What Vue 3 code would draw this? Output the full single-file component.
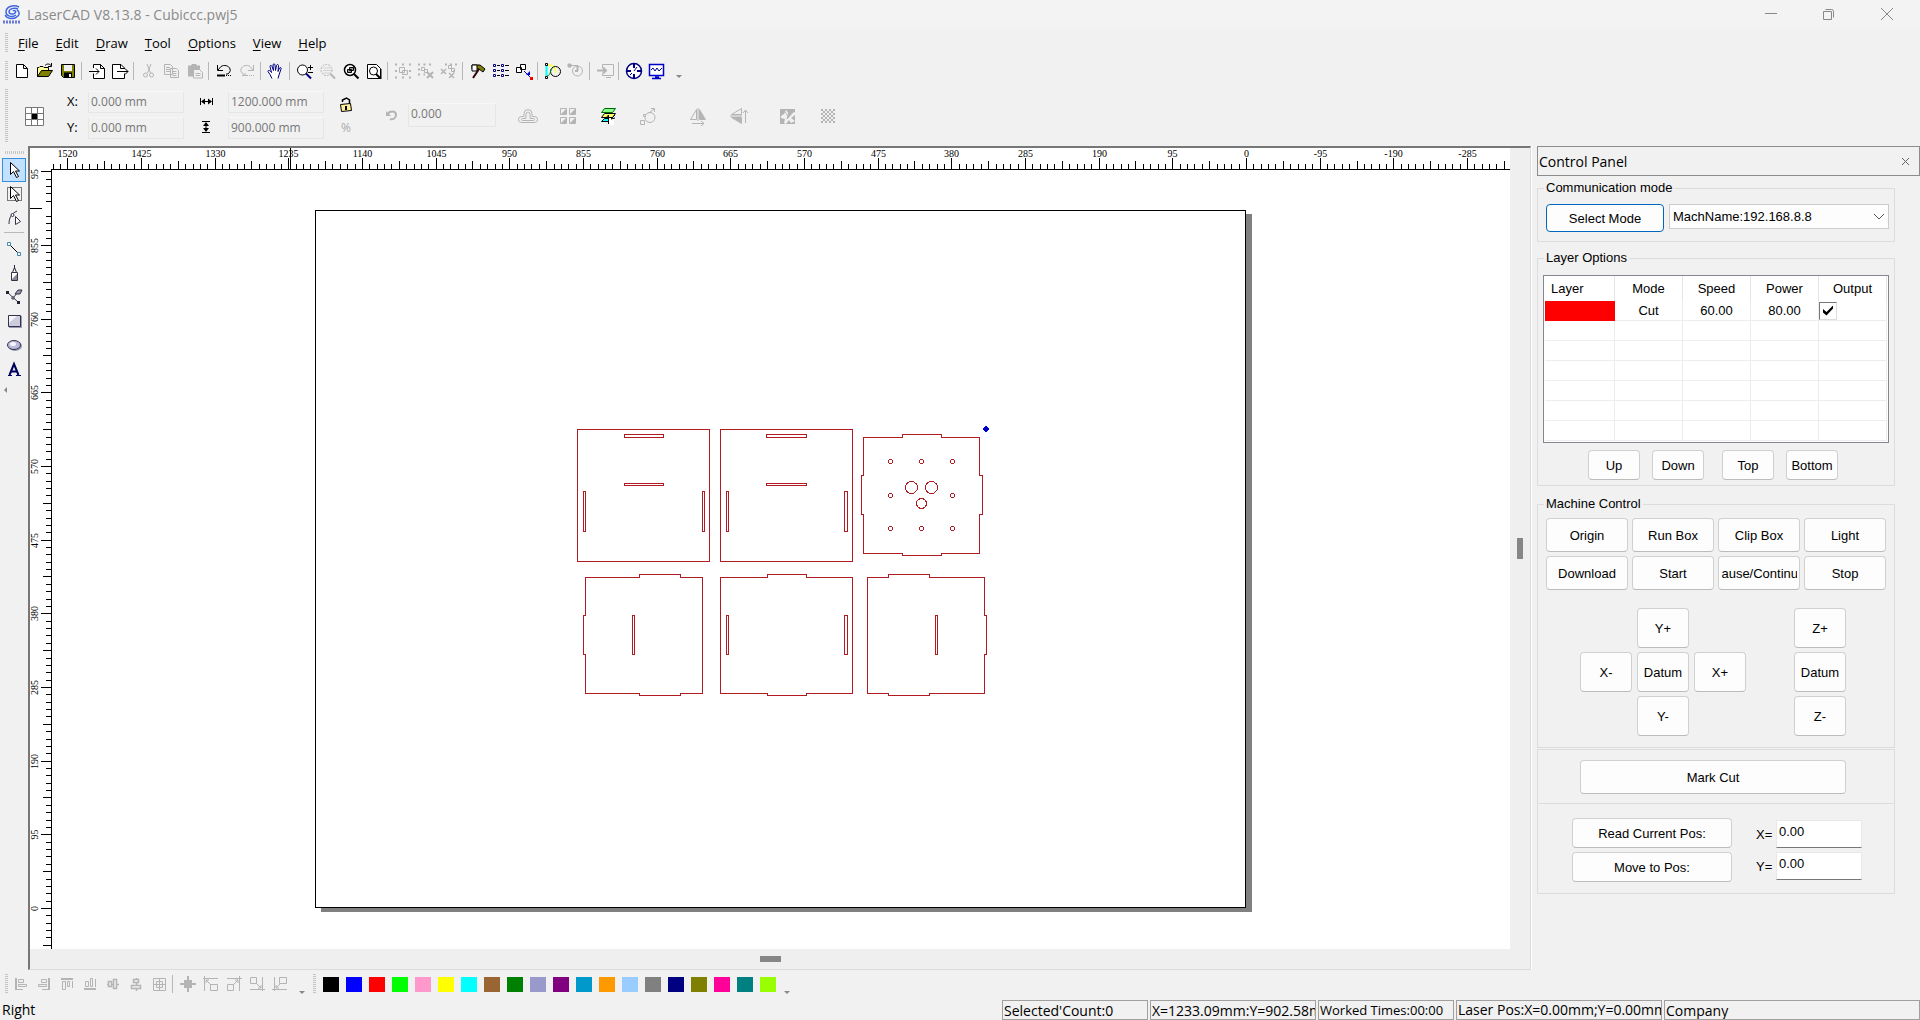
<script setup>
import { ref } from 'vue'

const G = '#b4b4b4'

const I = {
  new: '<path d="M4.500 3.500h7l4 4v9h-11zM11.500 3.500v4h4" fill="#fff" stroke="#000"/>',
  open: '<path d="M2.500 15.500v-9h1.500l1-1h3l1 1h4.500v3" fill="#ff9" stroke="#000"/><path d="M2.500 15.500l4-6h11l-4 6z" fill="#808000" stroke="#000"/><path d="M10 4.500c2-2 4-2 6 0M16.500 2v3.500h-3.500" fill="none" stroke="#000"/>',
  save: '<path d="M3.500 3.500h13v13h-11l-2-2z" fill="#808000" stroke="#000"/><path d="M6 4h8v6h-8z" fill="#f1f1f1"/><path d="M6 11.500h8v5h-8z" fill="#000"/><path d="M11 13h2v3h-2z" fill="#f1f1f1"/>',
  import: '<path d="M6.500 7v-3.500h7l4 4v10h-11v-5M13.500 3.500v4h4" fill="#fff" stroke="#000"/><path d="M2 10.500h10M9 7.500l3 3-3 3" fill="none" stroke="#000"/>',
  export: '<path d="M14.500 8v-1l-3.500-3.500h-8.500v14h12v-5M10.500 3.500v4h4" fill="#fff" stroke="#000"/><path d="M7 10.500h11M15 7.500l3 3-3 3" fill="none" stroke="#000"/>',
  cut: `<path d="M8 3l3.500 9M12 3l-3.500 9" stroke="${G}" fill="none"/><circle cx="6.500" cy="14" r="2" fill="none" stroke="${G}"/><circle cx="12.500" cy="14" r="2" fill="none" stroke="${G}"/>`,
  copy: `<path d="M2.500 3.500h6l2 2v8h-8zM8.500 7.500h6l2 2v7h-8zM4 6.500h4M4 8.500h4M4 10.500h4M10.500 10.500h4M10.500 12.500h4M10.500 14.500h4" fill="#f1f1f1" stroke="${G}"/>`,
  paste: `<path d="M3 4.500h3l1-1.500h4l1 1.500h3v11h-12z" fill="${G}"/><path d="M8.500 8.500h6l3 3v5.500h-9zM10.500 12.500h5M10.500 14.500h5M6 6.500h6" fill="#f1f1f1" stroke="${G}"/>`,
  undo: '<path d="M3.500 4v5.500h5.500M4 9l3-3.500c3-2 8-1 9 2.500 1 2-1 4-2 5h-2" fill="none" stroke="#000"/><path d="M3 14.500h8" stroke="#000" stroke-width="2"/><path d="M12 14.500h5" stroke="#000" stroke-dasharray="1 1"/>',
  redo: `<path d="M16.500 4v5.500h-5.500M16 9l-3-3.500c-3-2-8-1-9 2.500-1 2 1 4 2 5h3" fill="none" stroke="${G}"/><path d="M10 14.500h7" stroke="${G}" stroke-dasharray="1 1"/><path d="M5 14.500h5" stroke="${G}"/>`,
  hand: '<path d="M6 17.500l-2-4-2-3c0-1.500 1.500-1.500 2.500 0l1 1-1.500-6c0-1.500 1.500-1.500 2 0l1.500 4-.5-5.500c0-1.500 2-1.500 2 0l.5 5.500 1-5c.5-1.500 2-1 2 0l-.5 6 1.500-3.500c1-1 2-.5 1.500 1l-2 6-1 3.500" fill="#fff" stroke="#000080"/>',
  zoompm: '<circle cx="7.500" cy="9" r="5" fill="#fff" stroke="#000"/><path d="M11 12.500l5 5" stroke="#000080" stroke-width="2"/><path d="M13 6.500h5M15.500 4v5M13 11.500h5" stroke="#000"/>',
  zoomsel: `<circle cx="8.500" cy="9" r="5.500" fill="none" stroke="${G}" stroke-dasharray="2 1"/><path d="M5.500 7h7M5.500 9.500h7M5.500 12h7" stroke="${G}" stroke-dasharray="1 1"/><path d="M12.500 13l4.500 4.500" stroke="${G}" stroke-width="2"/>`,
  zoomobj: '<circle cx="9" cy="9" r="5.500" fill="#fff" stroke="#000" stroke-width="1.500"/><path d="M6.500 8.500h4v3h-4zM8.500 6.500h4v3h-4z" fill="#999" stroke="#000"/><path d="M13 13l4.500 4.500" stroke="#000" stroke-width="2"/>',
  zoompage: '<path d="M3.500 3.500h9l4 4v10h-13z" fill="#fff" stroke="#000"/><circle cx="9.500" cy="10" r="4" fill="#fff" stroke="#000"/><path d="M12 13l4 4" stroke="#000" stroke-width="2"/><path d="M17 8v10M4 17.500h13" stroke="#000"/>',
  group: `<path d="M6.500 6.500h5v5h-5zM9.500 9.500h5v4h-5z" fill="#f1f1f1" stroke="${G}"/><path d="M2 3.500h16M2 10h2M16 10h2M2 16.500h16" stroke="${G}" stroke-width="2" stroke-dasharray="2 5"/>`,
  ungroup: `<path d="M5.500 6.500h3v3h-3zM8.500 8.500h3v3h-3z" fill="none" stroke="${G}"/><path d="M2 3.500h13M2 8.500h2M2 13.500h7" stroke="${G}" stroke-width="2" stroke-dasharray="2 3.500"/><path d="M11 11l6 6M17 11l-6 6" stroke="${G}" stroke-width="2"/>`,
  ungroupall: `<path d="M9.500 4.500h3v3h-3zM12.500 7.500h3v3h-3z" fill="none" stroke="${G}"/><path d="M6 3.500h12M14 10.500h4" stroke="${G}" stroke-width="2" stroke-dasharray="2 3"/><path d="M2 8l5 5M7 8l-5 5M10 12l5 5M15 12l-5 5" stroke="${G}" stroke-width="1.500"/>`,
  hammer: '<path d="M4 4h8l5 4-2 3-4-3H4z" fill="#808000" stroke="#000"/><path d="M4 4h5v6h-5z" fill="#fff" stroke="#000"/><path d="M11 8l-6 9" stroke="#300" stroke-width="2"/>',
  list: '<path d="M2.500 3.500h2v2h-2zM2.500 8.500h2v2h-2zM2.500 13.500h2v2h-2zM10.500 3.500h2v2h-2zM10.500 8.500h2v2h-2zM10.500 13.500h2v2h-2z" fill="none" stroke="#000080"/><path d="M6 4.500h3M6 9.500h3M6 14.500h3M14 4.500h4M14 9.500h4M14 14.500h4" stroke="#000"/>',
  node: '<path d="M6.500 3.500h5v5h-5zM2.500 6.500h5v5h-5z" fill="#fff" stroke="#000"/><path d="M10 10l6 6" stroke="#00c"/><path d="M12 14h4v-4z" fill="#00c"/><path d="M16 16h3v3h-3z" fill="#e00"/>',
  curve: '<path d="M3.500 4v11" stroke="#0ff" stroke-width="2"/><path d="M5 4c6 0 8 3 8 8" stroke="#ff6" fill="none" stroke-width="2"/><circle cx="12.500" cy="10.500" r="5" fill="none" stroke="#000"/><path d="M2.500 2.500h2v2h-2zM2.500 15.500h2v2h-2z" fill="#fff" stroke="#000"/><path d="M4 15c3 0 3-4 5-8" fill="none" stroke="#090"/>',
  path: `<path d="M2 3h3v3h-3zM5 4.500h7" fill="${G}" stroke="${G}"/><circle cx="11.500" cy="10" r="5" fill="none" stroke="${G}"/><path d="M9 10h3M11.500 5v5" stroke="${G}" stroke-width="2"/>`,
  monitorin: `<path d="M7.500 7v-3.500h11v11h-11v-2M11 16.500h5" fill="none" stroke="${G}"/><path d="M2 9.500h9M8 6.500l3 3-3 3" fill="none" stroke="${G}" stroke-width="2"/>`,
  target: '<circle cx="10" cy="10" r="7.500" fill="#fff" stroke="#000080" stroke-width="1.500"/><path d="M10 2v5M10 13v5M2 10h5M13 10h5" stroke="#000080" stroke-width="2"/><path d="M10 10l3-4M8 12l-2 2" stroke="#000080"/>',
  wave: '<path d="M2.500 3.500h14v11h-14z" fill="#fff" stroke="#00c" stroke-width="1.500"/><path d="M4 9l2-2 2 3 2-3 2 3 3-3" fill="none" stroke="#009"/><path d="M8 16h4M5 17.500h9" stroke="#00c" stroke-width="1.500"/>',
  offset: `<path d="M3.500 16.500h13a3 3 0 0 0 0-6h-2.500v-3a4 4 0 0 0-8 0v3h-2.500a3 3 0 0 0 0 6z" fill="none" stroke="${G}"/><path d="M4.500 14.500h11a1 1 0 0 0 0-2h-3.500v-4.500a2 2 0 0 0-4 0v4.500h-3.500a1 1 0 0 0 0 2z" fill="none" stroke="${G}"/>`,
  array: `<path d="M2.500 2.500h6v6h-6zM11.500 2.500h6v6h-6zM2.500 11.500h6v6h-6zM11.500 11.500h6v6h-6z" fill="none" stroke="${G}"/><path d="M8 3v5h-5zM17 3v5h-5zM8 12v5h-5zM17 12v5h-5z" fill="${G}"/>`,
  layers: '<path d="M6.500 2.500h11l-3 4h-11z" fill="#8f8" stroke="#060"/><path d="M6.500 7.500h11l-3 4h-11z" fill="#ff6" stroke="#000"/><path d="M6.500 12.500h8l-3 3h-8z" fill="#0ff" stroke="#000"/><path d="M11 12v7h5v-7" fill="#fff"/><path d="M10.500 18v-9M8 12l2.500-3M17 9l-4 4 4-1" fill="none" stroke="#000"/>',
  rounded: `<circle cx="12" cy="11.500" r="5" fill="none" stroke="${G}"/><path d="M2.500 14.500h4v4h-4zM5.500 8.500h2v2h-2z" fill="#f1f1f1" stroke="${G}"/><path d="M11 7l5-4M13 2.500h3.500v3.500" fill="none" stroke="${G}"/>`,
  mirrorh: `<path d="M8.500 3.500v10h-6zM11.500 3.500v10h6zM10 2v13M4 17.500h12M13 15l3 2.500-3 2.500" fill="none" stroke="${G}"/><path d="M12 5v8h5z" fill="${G}"/>`,
  mirrorv: `<path d="M13.500 8.500h-10l10-6zM13.500 11.500h-10l10 6zM2 10h12M17.500 17v-12M15 7l2.500-3 2.500 3" fill="none" stroke="${G}"/><path d="M13 12v5l-8-5z" fill="${G}"/>`,
  invert: `<path d="M2 3h15v15h-15z" fill="${G}"/><path d="M8 4l3 4 6-2v3l-4 3 4 3-4 2-2-3-3 4-2-1 1-4-4-1v-2l3-2z" fill="#f1f1f1"/><path d="M6 5l5 6M11 6l5-1-7 8z" stroke="${G}" fill="${G}"/>`,
  dither: `<path d="M3 4h14M3 8h14M3 12h14M3 16h14" stroke="${G}" stroke-width="2" stroke-dasharray="2 2"/><path d="M5 6h12M5 10h12M5 14h12" stroke="${G}" stroke-width="2" stroke-dasharray="2 2"/>`,
  pick: '<path d="M6.500 2.500v12l3-3 3 6 2-1-3-5.500h4z" fill="#fff" stroke="#000"/>',
  pickbox: '<path d="M3.500 3.500h14v13h-14z" fill="none" stroke="#000" stroke-dasharray="1 1"/><path d="M6.500 2.500v12l3-3 3 6 2-1-3-5.500h4z" fill="#fff" stroke="#000"/>',
  editnode: '<path d="M5 16c0-6 2-10 8-13" fill="none" stroke="#334"/><circle cx="8.500" cy="7" r="1.500" fill="#fff" stroke="#334"/><path d="M11.500 8.500v8l5-3z" fill="#fff" stroke="#334"/>',
  line: '<path d="M5 5l10 10" stroke="#000"/><path d="M3.500 3.500h3v3h-3zM13.500 13.500h3v3h-3z" fill="#fff" stroke="#48a"/>',
  pen: '<path d="M10.500 2v3M8.500 9.500l2-5 2 5z" fill="#fff" stroke="#223"/><path d="M7.500 9.500h6v8h-6z" fill="#fff" stroke="#334"/><path d="M8 16l5-5v6h-5z" fill="#889"/>',
  bezier: '<path d="M3 5l11 10M9 11l5-6" stroke="#334"/><path d="M2 4h3v3h-3zM13 14h3v3h-3z" fill="#223"/><path d="M11 7l3-4h4l-2 4z" fill="#99a" stroke="#334"/><path d="M8 10h2v2h-2z" fill="#fff" stroke="#334"/>',
  rect: '<path d="M5 5h13v12h-13z" fill="#99b"/><path d="M4.500 4.500h12v11h-12z" fill="#ccd" stroke="#334"/><path d="M5 5h8l-8 7z" fill="#f5f5ff"/>',
  ellipse: '<ellipse cx="11" cy="11" rx="7" ry="5" fill="#99b"/><ellipse cx="10" cy="10" rx="6.500" ry="4.500" fill="#bbd" stroke="#334"/><ellipse cx="9" cy="9" rx="3" ry="2" fill="#f5f5ff"/>',
  text: '<path d="M5.500 16l4.500-11 4.500 11M7 12.500h6" fill="none" stroke="#000060" stroke-width="2"/><path d="M4 16.500h4M12 16.500h5" stroke="#000060"/>',
  al: `<path d="M5 4v12" stroke="${G}" stroke-width="2"/><path d="M7.500 5.500h5v3h-5zM7.500 10.500h8v2h-8zM6 15.500h6" fill="none" stroke="${G}"/>`,
  ar: `<path d="M15 4v12" stroke="${G}" stroke-width="2"/><path d="M7.500 5.500h5v3h-5zM4.500 10.500h8v2h-8zM8 15.500h6" fill="none" stroke="${G}"/>`,
  at: `<path d="M4 5h12" stroke="${G}" stroke-width="2"/><path d="M5.500 7.500h3v8h-3zM10.500 7.500h2v5h-2zM15.500 7v7" fill="none" stroke="${G}"/>`,
  ab: `<path d="M4 15h12" stroke="${G}" stroke-width="2"/><path d="M5.500 7.500h3v5h-3zM10.500 4.500h2v8h-2zM15.500 5v8" fill="none" stroke="${G}"/>`,
  ach: `<path d="M5.500 7.500h3v5h-3zM10.500 5.500h3v9h-3zM4 10.500h2M8 10.500h3M14 10.500h2" fill="none" stroke="${G}" stroke-width="1.500"/>`,
  acv: `<path d="M7.500 5.500h5v3h-5zM5.500 11.500h9v3h-9zM10.500 4v2M10.500 8v4M10.500 14v3" fill="none" stroke="${G}" stroke-width="1.500"/>`,
  acc: `<path d="M4.500 4.500h12v12h-12zM7.500 7.500h6v6h-6zM10.500 4v12M4 10.500h12" fill="none" stroke="${G}"/>`,
  ctr: `<path d="M10 2v16M2 10h16" stroke="${G}" stroke-width="2"/><path d="M6 6h8v8h-8z" fill="${G}"/>`,
  tl: `<path d="M3.500 2v15M2 4.500h15M9.500 10.500h7v6h-7zM5 6l5 5M5 9v-3h3" fill="none" stroke="${G}"/>`,
  tr: `<path d="M15.500 2v15M3 4.500h15M3.500 10.500h6v6h-6zM14 6l-5 5M14 9v-3h-3" fill="none" stroke="${G}"/>`,
  br: `<path d="M15.500 3v14M3 15.500h15M3.500 3.500h6v6h-6zM9 9l5 5M14 11v3h-3" fill="none" stroke="${G}"/>`,
  bl: `<path d="M4.500 3v14M2 15.500h15M9.500 3.500h7v6h-7zM11 9l-5 5M6 11v3h3" fill="none" stroke="${G}"/>`,
  anchor: '<path d="M1.500 1.500h18v18h-18z" fill="#fff" stroke="#777"/><path d="M7.500 1v18M13.500 1v18M1 7.500h18M1 13.500h18" stroke="#777"/><path d="M8 8h5v5h-5z" fill="#000"/>',
  wide: '<path d="M4.500 6v7M16.500 6v7M6 9.500h9" fill="none" stroke="#000"/><path d="M5 9.500l4-3v6zM16 9.500l-4-3v6z" fill="#000"/>',
  tall: '<path d="M6 3.500h8M6 14.500h8M10 5v8" fill="none" stroke="#000"/><path d="M10 4l3 4h-6zM10 14l3-4h-6z" fill="#000"/>',
  lock: '<path d="M13.500 9v-4l-3-2-4 2v2" fill="none" stroke="#000" stroke-width="1.500"/><path d="M4.500 9.500l10-1 1 7-10 1z" fill="#fe9" stroke="#000"/><path d="M10 11v4" stroke="#000" stroke-width="2"/>',
  rotate: `<path d="M6 9c1-3 8-4 8 1 0 3-3 5-6 4" fill="none" stroke="${G}" stroke-width="2"/><path d="M4 6v5h5z" fill="${G}"/>`
}

const menus = ['File', 'Edit', 'Draw', 'Tool', 'Options', 'View', 'Help']
const toolbar = [
  ['new', 'open', 'save'],
  ['import', 'export'],
  ['cut', 'copy', 'paste'],
  ['undo', 'redo'],
  ['hand'],
  ['zoompm', 'zoomsel', 'zoomobj', 'zoompage'],
  ['group', 'ungroup', 'ungroupall'],
  ['hammer', 'list', 'node'],
  ['curve', 'path'],
  ['monitorin'],
  ['target', 'wave']
]
const shapeOps = [['offset', 'array', 'layers', 'rounded'], ['mirrorh', 'mirrorv'], ['invert', 'dither']]
const selectTools = ['pick', 'pickbox', 'editnode']
const drawTools = ['line', 'pen', 'bezier', 'rect', 'ellipse', 'text']
const alignTools = [['al', 'ar', 'at', 'ab', 'ach', 'acv', 'acc'], ['ctr', 'tl', 'tr', 'br', 'bl']]
const swatches = ['#000000', '#0000ff', '#ff0000', '#00ff00', '#ff99cc', '#ffff00', '#00ffff', '#996633', '#008000', '#9999cc', '#800080', '#0099cc', '#ff9900', '#99ccff', '#808080', '#000080', '#808000', '#ff0099', '#008080', '#99ff00']

// Ruler: one numbered mark per 95 mm, ten ticks between marks
const PITCH = 73.67
const ORIGIN_X = 1216
const ORIGIN_Y = 760
function ruler(origin, from, to, sign, long, mid, short) {
  const ticks = []
  const labels = []
  for (let i = from; i <= to; i++) {
    const pos = Math.round(origin + (sign * i * PITCH) / 10) + 0.5
    ticks.push({ pos, size: i % 10 === 0 ? long : i % 5 === 0 ? mid : short })
    if (i % 10 === 0) labels.push({ pos, text: String((i / 10) * 95) })
  }
  return { ticks, labels }
}
const hRuler = ruler(ORIGIN_X, -39, 163, -1, 12, 9, 6)
const vRuler = ruler(ORIGIN_Y, -9, 101, -1, 11, 9, 6)

const box = (x1, y1, x2, y2) => `M${x1} ${y1}H${x2}V${y2}H${x1}Z`
const outlines = [
  box(547, 281, 679, 413), box(594, 286, 633, 289), box(594, 335, 633, 337), box(553, 343, 555, 383), box(672, 343, 674, 383),
  box(690, 281, 822, 413), box(736, 286, 776, 289), box(736, 335, 776, 337), box(696, 343, 698, 383), box(814, 343, 817, 383),
  'M833 289H872V286H911V289H949V327H952V366H949V405H911V407H872V405H833V366H831V327H833Z',
  'M555 429H609V426H650V429H672V545H650V547H609V545H555V506H553V467H555Z', box(602, 467, 604, 506),
  'M690 429H737V426H776V429H822V545H776V547H737V545H690Z', box(696, 467, 698, 506), box(814, 467, 817, 506),
  'M837 429H858V426H899V429H954V467H956V506H954V545H899V547H858V545H837Z', box(905, 467, 907, 506)
]
const holes = [
  ...[860, 891, 922].flatMap(x => [[x, 313, 2], [x, 380, 2]]),
  [860, 347, 2], [922, 347, 2], [881, 339, 6], [901, 339, 6], [891, 355, 5]
]

const x = ref('0.000 mm')
const y = ref('0.000 mm')
const w = ref('1200.000 mm')
const h = ref('900.000 mm')
const angle = ref('0.000')
const machine = ref('MachName:192.168.8.8')
const output = ref(true)
const posX = ref('0.00')
const posY = ref('0.00')
const machineButtons = ['Origin', 'Run Box', 'Clip Box', 'Light', 'Download', 'Start', 'Pause/Continue', 'Stop']
</script>

<template>
  <div class="app">
    <header class="titlebar">
      <svg class="logo" viewBox="0 0 20 20" aria-hidden="true">
        <path d="M17 3C11 0 4 3 4 8c0 4 6 6 10 3M16 5c-4-2-9 0-9 3 0 2 4 3 6 1 2-2-1-3-2-2M3 11c2 4 9 5 13 1 2-2 1-5-1-6" fill="none" stroke="#3f66e0" stroke-width="1.500" />
        <path d="M1 18h17" stroke="#6a78d8" stroke-width="3" stroke-dasharray="2 1" />
      </svg>
      <span class="title">LaserCAD V8.13.8 - Cubiccc.pwj5</span>
      <button class="win" aria-label="Minimize"><svg width="14" height="14"><path d="M1 6.500h12" stroke="#888" /></svg></button>
      <button class="win" aria-label="Restore"><svg width="14" height="14"><path d="M1.500 4.500h8v8h-8z" fill="none" stroke="#888" /><path d="M3.500 2.500h6q2 0 2 2v6" fill="none" stroke="#888" /></svg></button>
      <button class="win" aria-label="Close"><svg width="14" height="14"><path d="M1 1l12 12M13 1L1 13" stroke="#888" /></svg></button>
    </header>

    <nav class="menubar">
      <i class="grip"></i>
      <button v-for="m in menus" :key="m" class="menu"><u>{{ m[0] }}</u>{{ m.slice(1) }}</button>
    </nav>

    <div class="toolbar">
      <i class="grip"></i>
      <template v-for="(g, gi) in toolbar" :key="gi">
        <i v-if="gi" class="sep"></i>
        <button v-for="n in g" :key="n" class="tool" :aria-label="n"><svg class="ico" viewBox="0 0 20 20" v-html="I[n]"></svg></button>
      </template>
      <i class="more"></i>
    </div>

    <div class="props">
      <i class="grip"></i>
      <button class="tool anchor" aria-label="Anchor"><svg class="ico" viewBox="0 0 20 20" v-html="I.anchor"></svg></button>
      <div class="pair pos">
        <label for="px">X:</label><input id="px" v-model="x" disabled />
        <label for="py">Y:</label><input id="py" v-model="y" disabled />
      </div>
      <div class="pair size">
        <label for="pw" aria-label="Width"><svg class="ico" viewBox="0 0 20 20" v-html="I.wide"></svg></label><input id="pw" v-model="w" disabled />
        <label for="ph" aria-label="Height"><svg class="ico" viewBox="0 0 20 20" v-html="I.tall"></svg></label><input id="ph" v-model="h" disabled />
      </div>
      <div class="ratio">
        <button class="tool" aria-label="Lock ratio"><svg class="ico" viewBox="0 0 20 20" v-html="I.lock"></svg></button>
        <span>%</span>
      </div>
      <div class="angle">
        <label for="rot" aria-label="Rotation"><svg class="ico" viewBox="0 0 20 20" v-html="I.rotate"></svg></label><input id="rot" v-model="angle" disabled />
      </div>
      <div class="ops">
        <div v-for="(g, gi) in shapeOps" :key="gi" class="opgroup">
          <button v-for="n in g" :key="n" class="tool" :aria-label="n"><svg class="ico" viewBox="0 0 20 20" v-html="I[n]"></svg></button>
        </div>
      </div>
    </div>

    <main class="main">
      <aside class="toolbox">
        <i class="hgrip"></i>
        <button v-for="(n, i) in selectTools" :key="n" class="side" :class="{ on: i === 0 }" :aria-label="n"><svg class="ico" viewBox="0 0 20 20" v-html="I[n]"></svg></button>
        <i class="hsep"></i>
        <button v-for="n in drawTools" :key="n" class="side" :aria-label="n"><svg class="ico" viewBox="0 0 20 20" v-html="I[n]"></svg></button>
        <i class="left"></i>
      </aside>

      <section class="view">
        <svg class="sheet" shape-rendering="crispEdges">
          <defs>
            <clipPath id="hclip"><rect x="22" y="0" width="4000" height="24" /></clipPath>
            <clipPath id="vclip"><rect x="0" y="21" width="24" height="4000" /></clipPath>
          </defs>
          <g clip-path="url(#hclip)" stroke="#000">
            <path d="M22 21.500H4000" />
            <line v-for="t in hRuler.ticks" :key="t.pos" :x1="t.pos" :x2="t.pos" :y1="22 - t.size" y2="21" />
          </g>
          <text v-for="l in hRuler.labels" :key="l.text" class="num" :x="l.pos" y="9">{{ l.text }}</text>
          <path d="M260.500 0V21" stroke="#000" />
          <g clip-path="url(#vclip)">
            <path d="M21.500 21V4000" stroke="#000" />
            <line v-for="t in vRuler.ticks" :key="t.pos" :y1="t.pos" :y2="t.pos" :x1="22 - t.size" x2="21" stroke="#000" />
            <text v-for="l in vRuler.labels" :key="l.text" class="num" :transform="`translate(8 ${l.pos}) rotate(-90)`">{{ l.text }}</text>
            <path d="M12 60.500H21" stroke="#fff" />
            <path d="M0 60.500H12" stroke="#000" />
          </g>
          <path d="M291 66H1222V764H291Z" fill="#808080" />
          <path d="M285.500 62.500H1215.500V759.500H285.500Z" fill="#fff" stroke="#000" />
          <g transform="translate(.5 .5)" fill="none" stroke="#b01c22">
            <path v-for="d in outlines" :key="d" :d="d" />
            <circle v-for="c in holes" :key="c.join()" :cx="c[0]" :cy="c[1]" :r="c[2]" />
          </g>
          <path d="M956 278l3 3-3 3-3-3z" fill="#00c" stroke="#00c" />
        </svg>
        <div class="vbar"><i></i></div>
        <div class="hbar"><i></i></div>
      </section>

      <aside class="panel">
        <div class="ptitle"><span>Control Panel</span><button aria-label="Close panel"><svg width="9" height="9"><path d="M1 1l7 7M8 1L1 8" stroke="#666" /></svg></button></div>

        <fieldset class="comm">
          <legend>Communication mode</legend>
          <div class="commrow">
            <button class="btn focus">Select Mode</button>
            <div class="combo">
              <select v-model="machine" aria-label="Machine"><option>MachName:192.168.8.8</option></select>
              <svg width="12" height="8"><path d="M1 1l5 5 5-5" fill="none" stroke="#555" /></svg>
            </div>
          </div>
        </fieldset>

        <fieldset class="layers">
          <legend>Layer Options</legend>
          <div class="tablebox">
            <table>
              <thead><tr><th class="c0">Layer</th><th>Mode</th><th>Speed</th><th>Power</th><th>Output</th></tr></thead>
              <tbody>
                <tr><td class="red"></td><td>Cut</td><td>60.00</td><td>80.00</td><td class="out"><input v-model="output" type="checkbox" aria-label="Output" /></td></tr>
                <tr v-for="r in 6" :key="r"><td></td><td></td><td></td><td></td><td></td></tr>
              </tbody>
            </table>
          </div>
          <div class="order">
            <div class="opair"><button class="btn">Up</button><button class="btn">Down</button></div>
            <div class="opair"><button class="btn">Top</button><button class="btn">Bottom</button></div>
          </div>
        </fieldset>

        <fieldset class="machine">
          <legend>Machine Control</legend>
          <div class="mgrid">
            <button v-for="b in machineButtons" :key="b" class="btn"><span>{{ b }}</span></button>
          </div>
          <div class="jog">
            <div class="xy">
              <button class="btn yp">Y+</button>
              <button class="btn xm">X-</button>
              <button class="btn dt">Datum</button>
              <button class="btn xp">X+</button>
              <button class="btn ym">Y-</button>
            </div>
            <div class="z">
              <button class="btn">Z+</button>
              <button class="btn">Datum</button>
              <button class="btn">Z-</button>
            </div>
          </div>
        </fieldset>

        <div class="mark"><button class="btn">Mark Cut</button></div>

        <div class="position">
          <div class="pbtns"><button class="btn">Read Current Pos:</button><button class="btn">Move to Pos:</button></div>
          <div class="pins">
            <label for="cx">X=</label><input id="cx" v-model="posX" />
            <label for="cy">Y=</label><input id="cy" v-model="posY" />
          </div>
        </div>
      </aside>
    </main>

    <div class="bottom">
      <i class="grip"></i>
      <template v-for="(g, gi) in alignTools" :key="gi">
        <i v-if="gi" class="sep"></i>
        <button v-for="n in g" :key="n" class="tool" :aria-label="n"><svg class="ico" viewBox="0 0 20 20" v-html="I[n]"></svg></button>
      </template>
      <i class="more"></i>
      <i class="grip pal"></i>
      <div class="swatches"><button v-for="c in swatches" :key="c" :style="{ background: c }" :aria-label="c"></button></div>
      <i class="more"></i>
    </div>

    <footer class="status">
      <span class="hint">Right</span>
      <span class="pane p1">Selected'Count:0</span>
      <span class="pane p2">X=1233.09mm:Y=902.58mm</span>
      <span class="pane p3">Worked Times:00:00</span>
      <span class="pane p4">Laser Pos:X=0.00mm;Y=0.00mm</span>
      <span class="pane p5">Company</span>
    </footer>
  </div>
</template>

<style>
body { margin: 0; background: #f1f1f1; overflow: hidden; }
</style>

<style scoped>
.app { display: flex; flex-direction: column; height: 100vh; background: #f1f1f1; color: #000; font-family: "Open Sans", "Noto Sans", sans-serif; font-size: 13px; overflow: hidden; }
.app * { box-sizing: border-box; }
button { font: inherit; color: inherit; border: 0; background: none; padding: 0; margin: 0; }
input { font: inherit; margin: 0; min-width: 0; border-radius: 0; outline: 0; }
i { display: block; flex: none; }
svg { display: block; flex: none; }
.ico { width: 20px; height: 20px; overflow: visible; }

.titlebar { display: flex; align-items: center; height: 28px; flex: none; background: #f3f3f3; padding: 0 4px 0 2px; }
.logo { width: 20px; height: 20px; }
.title { flex: 1; padding-left: 5px; font-size: 14px; color: #8a8a8a; }
.win { width: 58px; height: 28px; display: flex; align-items: center; justify-content: center; }

.grip { width: 3px; height: 20px; margin-left: 5px; background: repeating-linear-gradient(#c4c4c4 0 1px, transparent 1px 2px); }
.menubar { display: flex; align-items: center; height: 30px; flex: none; gap: 17px; }
.menubar .grip { margin-right: -7px; }
.menu { line-height: 20px; }
.menu u { text-underline-offset: 2px; }

.toolbar { display: flex; align-items: center; height: 26px; flex: none; }
.toolbar .grip { margin-right: 2px; }
.tool { width: 23px; height: 20px; display: flex; align-items: center; justify-content: center; flex: none; }
.sep { width: 6px; height: 18px; background: linear-gradient(#b8b8b8, #b8b8b8) 2px 0 / 1px 18px no-repeat; }
.more { width: 0; height: 0; border: 3px solid transparent; border-top-color: #888; border-bottom: 0; align-self: flex-end; margin: 0 0 6px 8px; }

.props { display: flex; align-items: center; height: 62px; flex: none; padding-top: 2px; font-size: 12px; color: #777; }
.props .grip { height: 54px; }
.anchor { margin: 0 22px 0 14px; }
.pair { display: grid; align-items: center; row-gap: 4px; margin-bottom: 2px; }
.pos { grid-template-columns: 21px 96px; margin-right: 12px; }
.pos label { color: #000; font-size: 13px; line-height: 20px; padding-bottom: 2px; }
.size { grid-template-columns: 32px 96px; }
.props input { height: 22px; width: 100%; border: 1px solid #e6e6e6; border-top-color: #f8f8f8; background: #f1f1f1; padding: 0 2px 2px; color: #777; }
.ratio { width: 44px; display: flex; flex-direction: column; align-items: center; gap: 4px; color: #aaa; }
.ratio span { line-height: 18px; }
.angle { display: flex; align-items: center; margin-left: 14px; gap: 6px; margin-right: 20px; }
.angle label { margin-bottom: 2px; }
.props .angle input { width: 88px; height: 24px; margin-bottom: 2px; padding-bottom: 3px; }
.ops, .opgroup { display: flex; }
.ops { gap: 27px; }
.opgroup { gap: 17px; }

.main { flex: 1; display: flex; min-height: 0; }
.toolbox { width: 28px; flex: none; display: flex; flex-direction: column; padding-left: 2px; }
.hgrip { width: 20px; height: 3px; margin: 5px 2px 4px 3px; background: repeating-linear-gradient(90deg, #c4c4c4 0 1px, transparent 1px 2px); }
.side { width: 24px; height: 24px; display: flex; align-items: center; justify-content: center; flex: none; }
.side.on { background: #c2e0ff; border: 1px solid #3390e0; }
.hsep { width: 20px; height: 1px; background: #b8b8b8; margin: 2px 2px 4px; }
.left { width: 0; height: 0; border: 3px solid transparent; border-right-color: #888; border-left: 0; margin: 6px 0 0 2px; }

.view { flex: 1; min-width: 0; display: grid; grid-template: minmax(0, 1fr) 20px / minmax(0, 1fr) 20px; border-left: 2px solid #777; border-top: 2px solid #777; border-right: 1px solid #dcdcdc; border-bottom: 1px solid #dcdcdc; background: #efefef; }
.sheet { width: 100%; height: 100%; background: #fff; overflow: hidden; }
.num { font: 10px "Liberation Serif", serif; text-anchor: middle; fill: #000; stroke: none; }
.vbar, .hbar { display: flex; align-items: center; justify-content: center; }
.vbar i { width: 6px; height: 21px; background: #868686; }
.hbar i { width: 21px; height: 6px; background: #868686; }

.panel { width: 389px; flex: none; padding-left: 5px; font-family: "Liberation Sans", Arial, sans-serif; border-left: 1px solid #fff; }
.ptitle { height: 30px; border: 1px solid #8c8c8c; display: flex; align-items: center; justify-content: space-between; padding: 0 9px 0 1px; font-family: "Open Sans", sans-serif; font-size: 14px; }
.comm, .layers, .machine, .mark, .position { width: 358px; margin: 0; padding: 0; border: 1px solid #dcdcdc; }
legend { margin-left: 6px; padding: 0 2px; line-height: 16px; }
.btn { display: flex; align-items: center; justify-content: center; background: #fdfdfd; border: 1px solid #d0d0d0; border-bottom-color: #bbb; border-radius: 4px; white-space: nowrap; overflow: hidden; }
.comm { margin-top: 4px; }
.commrow { display: flex; gap: 5px; padding: 8px 5px 9px 8px; }
.commrow .btn { width: 118px; height: 28px; }
.focus { border-color: #0067c0; }
.combo { position: relative; flex: 1; height: 25px; }
.combo select { appearance: none; width: 100%; height: 25px; font: inherit; color: #000; background: #fdfdfd; border: 1px solid #ccc; border-radius: 0; padding: 0 3px; margin: 0; display: block; }
.combo svg { position: absolute; right: 4px; top: 9px; pointer-events: none; }

.layers { margin-top: 8px; }
.tablebox { margin: 9px 5px 7px; border: 1px solid #828790; background: #fff; padding: 0 1px 1px; }
table { width: 100%; border-collapse: separate; border-spacing: 0; table-layout: fixed; }
th { height: 25px; font-weight: normal; padding: 0; border-right: 1px solid #e5e5e5; line-height: 16px; }
.c0 { width: 70px; text-align: left; padding-left: 6px; }
td { height: 20px; padding: 0; text-align: center; border-right: 1px solid #ededed; border-bottom: 1px solid #ededed; line-height: 16px; }
td.red { background: #f00; border-color: #f00; }
.out { text-align: left; }
.out input { appearance: none; display: block; position: relative; width: 18px; height: 18px; background: #fff; border: 1px solid #ddd; border-top-color: #777; border-left-color: #777; }
.out input:checked::after { content: ""; position: absolute; left: 3px; top: 3px; width: 10px; height: 10px; background: #000; clip-path: polygon(0 35%, 35% 65%, 100% 0, 100% 30%, 35% 100%, 0 70%); }
.order { display: flex; gap: 18px; padding: 0 0 5px 50px; }
.opair { display: flex; gap: 12px; }
.order .btn { width: 52px; height: 30px; }

.machine { margin-top: 10px; }
.mgrid { display: grid; grid-template-columns: repeat(4, 82px); gap: 4px; padding: 6px 0 0 8px; }
.mgrid .btn { height: 34px; padding: 0 2px; }
.mgrid span { flex: 1; min-width: 0; overflow: hidden; display: flex; justify-content: center; }
.jog { display: flex; justify-content: space-between; padding: 18px 48px 11px 42px; }
.xy { display: grid; grid-template: "a yp b" 40px "xm dt xp" 40px "c ym d" 40px / 52px 52px 52px; gap: 4px 5px; }
.yp { grid-area: yp; }
.xm { grid-area: xm; }
.dt { grid-area: dt; }
.xp { grid-area: xp; }
.ym { grid-area: ym; }
.z { display: grid; grid-template: repeat(3, 40px) / 52px; gap: 4px; }
.mark { margin-top: 1px; padding: 10px 48px 9px 42px; border-bottom: 0; }
.mark .btn { width: 100%; height: 34px; }
.position { display: flex; justify-content: space-between; padding: 14px 32px 11px 34px; }
.pbtns { display: flex; flex-direction: column; gap: 4px; width: 160px; }
.pbtns .btn { height: 30px; }
.pins { display: grid; grid-template-columns: 20px 86px; row-gap: 4px; align-content: center; align-items: center; }
.pins input { height: 28px; background: #fff; border: 1px solid #e8e8e8; border-bottom-color: #777; padding: 0 2px 6px; }

.bottom { display: flex; align-items: center; height: 30px; flex: none; padding-bottom: 2px; }
.bottom .grip + .tool { margin-left: 1px; }
.bottom .more { margin-bottom: 4px; }
.pal { margin: 0 7px 0 8px; }
.swatches { display: flex; gap: 7px; }
.swatches button { width: 16px; height: 15px; }

.status { display: flex; height: 20px; flex: none; gap: 2px; font-size: 14px; line-height: 20px; white-space: nowrap; overflow: hidden; }
.hint { flex: 1; padding-left: 2px; }
.pane { border: 1px solid #a0a0a0; padding: 0 1px; overflow: hidden; }
.p1 { width: 146px; }
.p2 { width: 166px; }
.p3 { width: 136px; font-size: 13px; line-height: 18px; }
.p4 { width: 206px; line-height: 18px; }
.p5 { width: 256px; }
</style>
